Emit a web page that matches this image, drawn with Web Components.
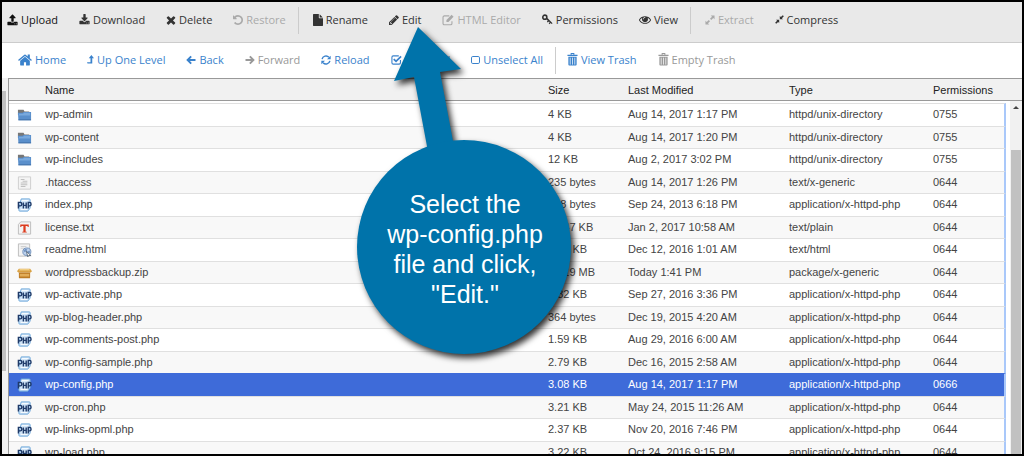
<!DOCTYPE html>
<html lang="en">
<head>
<meta charset="utf-8">
<title>File Manager</title>
<style>
body {
  margin: 0;
  font-family: "Liberation Sans", Arial, sans-serif;
}
</style>
</head>
<body>

<file-manager>
  <tool-bar slot="actions" class="actions">
    <tool-group>
      <tool-button icon="upload" strong>Upload</tool-button>
      <tool-button icon="download">Download</tool-button>
      <tool-button icon="times">Delete</tool-button>
      <tool-button icon="undo" disabled>Restore</tool-button>
    </tool-group>
    <tool-group>
      <tool-button icon="file">Rename</tool-button>
      <tool-button icon="pencil">Edit</tool-button>
      <tool-button icon="compose" disabled>HTML Editor</tool-button>
      <tool-button icon="key">Permissions</tool-button>
      <tool-button icon="eye">View</tool-button>
    </tool-group>
    <tool-group>
      <tool-button icon="expand" disabled>Extract</tool-button>
      <tool-button icon="compress">Compress</tool-button>
    </tool-group>
  </tool-bar>

  <tool-bar slot="navigation" class="navigation">
    <tool-group>
      <tool-button icon="home">Home</tool-button>
      <tool-button icon="levelup">Up One Level</tool-button>
      <tool-button icon="left">Back</tool-button>
      <tool-button icon="right" disabled>Forward</tool-button>
      <tool-button icon="refresh">Reload</tool-button>
      <tool-button icon="checked">Select All</tool-button>
      <tool-button icon="unchecked">Unselect All</tool-button>
    </tool-group>
    <tool-group>
      <tool-button icon="trash">View Trash</tool-button>
      <tool-button icon="trash" disabled>Empty Trash</tool-button>
    </tool-group>
  </tool-bar>

  <file-table slot="files"></file-table>

  <call-out slot="overlay">Select the<br>wp-config.php<br>file and click,<br>"Edit."</call-out>
</file-manager>

<script>
const tray = 'zm256 0q0-26-19-45t-45-19-45 19-19 45 19 45 45 19 45-19 19-45zm128-224v320q0 40-28 68t-68 28h-1472q-40 0-68-28t-28-68v-320q0-40 28-68t68-28';

// [width in px, height in px, viewBox, markup]
const toolIcons = {
  upload: [11, 12, '0 0 1792 1792', `<path d="M1344 1472q0-26-19-45t-45-19-45 19-19 45 19 45 45 19 45-19 19-45${tray}h427q21 56 70.5 92t110.5 36h256q61 0 110.5-36t70.5-92h427q40 0 68 28t28 68zm-325-648q-17 40-59 40h-256v448q0 26-19 45t-45 19h-256q-26 0-45-19t-19-45v-448h-256q-42 0-59-40-17-39 14-69l448-448q18-19 45-19t45 19l448 448q31 30 14 69z"/>`],
  download: [11, 12, '0 0 1792 1792', `<path d="M1344 1344q0-26-19-45t-45-19-45 19-19 45 19 45 45 19 45-19 19-45${tray}h465l135 136q58 56 136 56t136-56l136-136h464q40 0 68 28t28 68zm-325-569q17 41-14 70l-448 448q-18 19-45 19t-45-19l-448-448q-31-29-14-70 17-39 59-39h256v-448q0-26 19-45t45-19h256q26 0 45 19t19 45v448h256q42 0 59 39z"/>`],
  times: [10, 10, '200 200 1392 1392', '<path d="M1490 1322q0 40-28 68l-136 136q-28 28-68 28t-68-28l-294-294-294 294q-28 28-68 28t-68-28l-136-136q-28-28-28-68t28-68l294-294-294-294q-28-28-28-68t28-68l136-136q28-28 68-28t68 28l294 294 294-294q28-28 68-28t68 28l136 136q28 28 28 68t-28 68l-294 294 294 294q28 28 28 68z"/>'],
  undo: [10, 10, '128 128 1536 1536', '<path d="M1664 896q0 156-61 298t-164 245-245 164-298 61q-172 0-327-72.5t-264-204.5q-7-10-6.5-22.5t8.5-20.5l137-138q10-9 25-9 16 2 23 12 73 95 179 147t225 52q104 0 198.5-40.5t163.5-109.5 109.5-163.5 40.5-198.5-40.5-198.5-109.5-163.5-163.5-109.5-198.5-40.5q-98 0-188 35.5t-160 101.5l137 138q31 30 14 69-17 40-59 40h-448q-26 0-45-19t-19-45v-448q0-42 40-59 39-17 69 14l130 129q107-101 244.5-156.5t284.5-55.5q156 0 298 61t245 164 164 245 61 298z"/>'],
  file: [10, 12, '128 0 1536 1792', '<path d="M1152 512v-472q22 14 36 28l408 408q14 14 28 36h-472zm-128 32q0 40 28 68t68 28h544v1056q0 40-28 68t-68 28h-1344q-40 0-68-28t-28-68v-1600q0-40 28-68t68-28h800v544z"/>'],
  pencil: [10, 10, '128 128 1536 1536', '<path d="M491 1536l91-91-235-235-91 91v107h128v128h107zm523-928q0-22-22-22-10 0-17 7l-542 542q-7 7-7 17 0 22 22 22 10 0 17-7l542-542q7-7 7-17zm-54-192l416 416-832 832h-416v-416zm683 96q0 53-37 90l-166 166-416-416 166-165q36-38 90-38 53 0 91 38l235 234q37 39 37 91z"/>'],
  compose: [12, 12, '0 0 14 14', '<path d="M8.5 2.2H3A1.6 1.6 0 0 0 1.2 3.8V11A1.6 1.6 0 0 0 3 12.6h7A1.6 1.6 0 0 0 11.6 11V8.6" fill="none" stroke="currentColor" stroke-width="1.3"/><path d="M11.2 1l2.3 2.3-6 6H5.2V7z"/>'],
  key: [11, 11, '1 1 12.5 12.5', '<path d="M7.2 5.6l5.8 5.8-1 1-1.2-1.1-1.2 1.3-1-1 1.2-1.3-.9-.9-1.3 1.3-1-1L7.5 8.5 5.8 6.9z"/><circle cx="4.2" cy="4.6" r="2.3" fill="none" stroke="currentColor" stroke-width="1.8"/>'],
  eye: [12, 12, '0 64 1792 1792', '<path d="M1664 960q-152-236-381-353 61 104 61 225 0 185-131.5 316.5t-316.5 131.5-316.5-131.5-131.5-316.5q0-121 61-225-229 117-381 353 133 205 333.5 326.5t434.5 121.5 434.5-121.5 333.5-326.5zm-720-384q0-20-14-34t-34-14q-125 0-214.5 89.5t-89.5 214.5q0 20 14 34t34 14 34-14 14-34q0-86 61-147t147-61q20 0 34-14t14-34zm848 384q0 34-20 69-140 230-376.5 368.5t-499.5 138.5-499.5-139-376.5-368q-20-35-20-69t20-69q140-229 376.5-368t499.5-139 499.5 139 376.5 368q20 35 20 69z"/>'],
  expand: [10, 10, '.5 .5 11 11', '<path d="M6.8 1H11v4.2L9.6 3.8 7.4 6 6 4.6l2.2-2.2zM1 6.8l1.4 1.4L4.6 6 6 7.4 3.8 9.6 5.2 11H1z"/>'],
  compress: [9, 9, '0 0 12 12', '<path d="M6.4 5.6V1.4L7.8 2.8 10.4.2l1.4 1.4-2.6 2.6 1.4 1.4zM5.6 6.4v4.2L4.2 9.2l-2.6 2.6L.2 10.4l2.6-2.6-1.4-1.4z"/>'],
  home: [14, 12, '64 200 1664 1400', '<path d="M1472 992v480q0 26-19 45t-45 19h-384v-384h-256v384h-384q-26 0-45-19t-19-45v-480q0-1 .5-3t.5-3l575-474 575 474q1 2 1 6zm223-69l-62 74q-8 9-21 11h-3q-13 0-21-7l-692-577-692 577q-12 8-24 7-13-2-21-11l-62-74q-8-10-7-23.5t11-21.5l719-599q32-26 76-26t76 26l244 204v-195q0-14 9-23t23-9h192q14 0 23 9t9 23v408l219 182q10 8 11 21.5t-7 23.5z"/>'],
  levelup: [7, 9, '0 0 8 10', '<path d="M5 0l3 3.5H6V9.5H.6L0 8h4V3.5H2z"/>'],
  left: [10, 10, '0 0 12 12', '<path d="M6.2 1.6L1.9 6l4.3 4.4M2.4 6h9" fill="none" stroke="currentColor" stroke-width="2.3"/>'],
  right: [10, 10, '0 0 12 12', '<path d="M5.8 1.6L10.1 6l-4.3 4.4M9.6 6h-9" fill="none" stroke="currentColor" stroke-width="2.3"/>'],
  refresh: [10, 10, '0 0 12 12', '<path d="M1.3 5A4.8 4.8 0 0 1 9.5 2.8M10.7 7A4.8 4.8 0 0 1 2.5 9.2" fill="none" stroke="currentColor" stroke-width="1.7"/><path d="M11.6.8v4.4H7.2zM.4 11.2V6.8h4.4z"/>'],
  checked: [11, 11, '0 0 12 12', '<path d="M10.3 6.6V9.5A1.5 1.5 0 0 1 8.8 11H2.5A1.5 1.5 0 0 1 1 9.5v-6A1.5 1.5 0 0 1 2.5 2h6" fill="none" stroke="currentColor" stroke-width="1.2"/><path d="M3 5.5l2.5 2.5 5.5-5.5" fill="none" stroke="currentColor" stroke-width="1.9"/>'],
  unchecked: [9, 10, '0 0 9 10', '<rect x=".5" y="1.5" width="8" height="7" rx="1.3" fill="none" stroke="currentColor"/>'],
  trash: [11, 13, '0 0 12 14', '<path d="M1.5 4h9v8.5q0 1-1 1h-7q-1 0-1-1zM.5 2h11v1.2H.5zM4 0h4v2H7V1H5v1H4z"/><path d="M3.5 5v7.5M6 5v7.5M8.5 5v7.5" stroke="#fff" stroke-width=".8"/>']
};

const fileIcons = {
  folder: '<path d="M1 2h6l1 2h5v4H1z" fill="#777"/><path d="M1 5.5h5l1-1h8V14H1.5z" fill="#5a8fcb"/><path d="M2 6.5h4.5l1-1h6.5v3H2z" fill="#79a9dd"/><path d="M1.5 13.5H15" stroke="#3f6ea5"/>',
  generic: '<path d="M1.5 1h13v14h-13z" fill="#f4f4f4" stroke="#ccc"/><path d="M4 4h4M6 6h5M4 8h7M4 10h7M4 12h5" stroke="#bbb"/>',
  text: '<path d="M4 1h10.5v14h-13V4z" fill="#f3f3f3" stroke="#bbb"/><path d="M3.5 4h9v2.800h-.9L11 5.600H9.200v6.600h1.200v1H5.600v-1h1.200V5.600H5l-.6 1.200h-.9z" fill="#dc3a1c"/>',
  html: '<path d="M1.5 1h12v14h-12z" fill="#f3f3f3" stroke="#bbb"/><path d="M4 4h6M4 6h4" stroke="#ccc"/><circle cx="10.5" cy="10" r="4.3" fill="#bdd2ee" stroke="#6c8db8"/><path d="M7 8.5l2-2 2 1-1 2-2 1zM10.5 10l3-1.5.5 2-2 2.5z" fill="#7596c4"/><path d="M10 9.5l5 5-2.5-.3-1 1.6z" fill="#fff" stroke="#567"/>',
  zip: '<path d="M2 3h12l2 3-1.5 1.5h-13L0 6z" fill="#d9a143"/><path d="M3 3.5h10L14 5H2z" fill="#f0cd82"/><path d="M2 7.5h12V13q0 1-1 1H3q-1 0-1-1z" fill="#bd7c25"/><path d="M3 9h10v3H3z" fill="#e2ad58"/>',
  php: '<path d="M4.5 1H13q1 0 1 1v9.5L11.500 15H3q-1 0-1-1v-3z" fill="#cfe4f8" stroke="#68a4d8"/><path d="M5 3h7M4 13h7" stroke="#fff"/><path d="M1.5 12V5h2q1.600 0 1.600 2T3.500 9h-2M6.800 5v7M9.800 5v7M6.800 8.500h3M12 12V5h1.500Q15 5 15 7t-1.500 2H12" fill="none" stroke="#1f3a68" stroke-width="1.500"/>'
};

class ToolButton extends HTMLElement {
  connectedCallback() {
    const [width, height, box, markup] = toolIcons[this.getAttribute('icon')];
    const root = this.attachShadow({ mode: 'open' });
    root.innerHTML = `
      <style>
      :host {
        display: block;
        flex: none;
      }
      button {
        display: flex;
        align-items: center;
        gap: 3px;
        padding: 0 0 2px;
        border: 0;
        background: none;
        color: var(--tool-color);
        font: 11px/18px "Open Sans", "Noto Sans", sans-serif;
        white-space: nowrap;
      }
      :host([strong]) button { color: #111; }
      button:disabled { color: var(--tool-disabled); }
      svg {
        flex: none;
        fill: currentColor;
      }
      </style>
      <button type="button"${this.hasAttribute('disabled') ? ' disabled' : ''}>
        <svg width="${width}" height="${height}" viewBox="${box}" preserveAspectRatio="none" aria-hidden="true">${markup}</svg>
        <span><slot></slot></span>
      </button>
    `;
  }
}

class ToolGroup extends HTMLElement {
  constructor() {
    super();
    this.attachShadow({ mode: 'open' }).innerHTML = `
      <style>
      :host {
        display: flex;
        align-items: center;
        gap: 21px;
        height: 27px;
      }
      :host(:not(:first-of-type)) {
        margin-left: 12px;
        padding-left: var(--group-indent);
        border-left: 1px solid #ccc;
      }
      </style>
      <slot></slot>
    `;
  }
}

class ToolBar extends HTMLElement {
  constructor() {
    super();
    this.attachShadow({ mode: 'open' }).innerHTML = `
      <style>
      :host {
        display: flex;
        align-items: center;
        overflow: hidden;
      }
      </style>
      <slot></slot>
    `;
  }
}

class FileTable extends HTMLElement {
  constructor() {
    super();

    this.files = [
      ['folder', 'wp-admin', '4 KB', 'Aug 14, 2017 1:17 PM', 'httpd/unix-directory', '0755'],
      ['folder', 'wp-content', '4 KB', 'Aug 14, 2017 1:20 PM', 'httpd/unix-directory', '0755'],
      ['folder', 'wp-includes', '12 KB', 'Aug 2, 2017 3:02 PM', 'httpd/unix-directory', '0755'],
      ['generic', '.htaccess', '235 bytes', 'Aug 14, 2017 1:26 PM', 'text/x-generic', '0644'],
      ['php', 'index.php', '418 bytes', 'Sep 24, 2013 6:18 PM', 'application/x-httpd-php', '0644'],
      ['text', 'license.txt', '19.47 KB', 'Jan 2, 2017 10:58 AM', 'text/plain', '0644'],
      ['html', 'readme.html', '7.24 KB', 'Dec 12, 2016 1:01 AM', 'text/html', '0644'],
      ['zip', 'wordpressbackup.zip', '15.19 MB', 'Today 1:41 PM', 'package/x-generic', '0644'],
      ['php', 'wp-activate.php', '5.32 KB', 'Sep 27, 2016 3:36 PM', 'application/x-httpd-php', '0644'],
      ['php', 'wp-blog-header.php', '364 bytes', 'Dec 19, 2015 4:20 AM', 'application/x-httpd-php', '0644'],
      ['php', 'wp-comments-post.php', '1.59 KB', 'Aug 29, 2016 6:00 AM', 'application/x-httpd-php', '0644'],
      ['php', 'wp-config-sample.php', '2.79 KB', 'Dec 16, 2015 2:58 AM', 'application/x-httpd-php', '0644'],
      ['php', 'wp-config.php', '3.08 KB', 'Aug 14, 2017 1:17 PM', 'application/x-httpd-php', '0666'],
      ['php', 'wp-cron.php', '3.21 KB', 'May 24, 2015 11:26 AM', 'application/x-httpd-php', '0644'],
      ['php', 'wp-links-opml.php', '2.37 KB', 'Nov 20, 2016 7:46 PM', 'application/x-httpd-php', '0644'],
      ['php', 'wp-load.php', '3.22 KB', 'Oct 24, 2016 9:15 PM', 'application/x-httpd-php', '0644']
    ];
    this.selected = 'wp-config.php';

    const rows = this.files.map(([icon, name, ...rest]) => `
      <tr${name === this.selected ? ' class="selected"' : ''}>
        <td><svg width="15" height="14" viewBox="0 0 16 16" preserveAspectRatio="none" aria-hidden="true">${fileIcons[icon]}</svg></td>
        <td>${name}</td>
        ${rest.map(cell => `<td>${cell}</td>`).join('')}
      </tr>`).join('');

    this.attachShadow({ mode: 'open' }).innerHTML = `
      <style>
      :host {
        display: flex;
        align-items: stretch;
        border-top: 1px solid #999;
        border-left: 1px solid #999;
      }
      table {
        flex: 1;
        min-width: 0;
        table-layout: fixed;
        border-spacing: 0;
        font-size: 11px;
        line-height: 16px;
        color: #444;
      }
      .icon { width: 36px; }
      .size { width: 80px; }
      .modified { width: 161px; }
      .type { width: 144px; }
      .permissions { width: 73px; }
      th, td {
        box-sizing: border-box;
        padding: 0;
        text-align: left;
        white-space: nowrap;
      }
      th {
        height: 22px;
        background: #f1f1f1;
        border-bottom: 1px solid #999;
        color: #222;
        font-weight: normal;
      }
      /* strip of the scrolled-off row that shows under the header */
      .peek td {
        height: 2px;
        line-height: 0;
      }
      tbody td {
        border-top: 1px solid #e0e0e0;
        height: 22px;
        padding-bottom: 2px;
      }
      tbody tr:nth-child(odd) td { height: 23px; }
      tbody tr:nth-child(even) { background: #f8f8f8; }
      tbody td:first-child { padding: 0 0 0 8px; }
      tbody td:last-child { border-right: 2px solid #a9c8fa; }
      tbody tr.selected { background: #3e6bd9; color: #fff; }
      tbody tr.selected td { border-top-color: #3e6bd9; }
      svg { display: block; }
      .rail {
        flex: 0 0 16px;
        display: flex;
        flex-direction: column;
      }
      .cap {
        height: 21px;
        background: #f1f1f1;
        border-bottom: 1px solid #999;
      }
      .track {
        flex: 1;
        display: flex;
        flex-direction: column;
        align-items: center;
        margin-left: 4px;
        background: #f1f1f1;
      }
      .arrow {
        margin: 5px 0 0;
        border: 3px solid transparent;
        border-top-width: 0;
        border-bottom-color: #444;
      }
      .thumb {
        flex: 1;
        align-self: stretch;
        margin: 41px 1px 0;
        background: #c1c1c1;
      }
      </style>
      <table>
        <colgroup>
          <col class="icon"><col><col class="size"><col class="modified"><col class="type"><col class="permissions">
        </colgroup>
        <thead>
          <tr><th></th><th>Name</th><th>Size</th><th>Last Modified</th><th>Type</th><th>Permissions</th></tr>
          <tr class="peek"><td colspan="6"></td></tr>
        </thead>
        <tbody>${rows}</tbody>
      </table>
      <div class="rail">
        <div class="cap"></div>
        <div class="track"><div class="arrow"></div><div class="thumb"></div></div>
      </div>
    `;
  }
}

class CallOut extends HTMLElement {
  constructor() {
    super();
    this.attachShadow({ mode: 'open' }).innerHTML = `
      <style>
      :host {
        position: absolute;
        left: 355px;
        top: 25px;
        width: 214px;
        height: 327px;
        pointer-events: none;
      }
      svg {
        display: block;
        overflow: visible;
        fill: #0073aa;
        filter: drop-shadow(3px 4px 3px rgba(0, 0, 0, .8));
      }
      div {
        position: absolute;
        inset: 117px 0 0 2px;
        display: grid;
        place-content: center;
        color: #fff;
        font-size: 25px;
        line-height: 30px;
        text-align: center;
        white-space: nowrap;
      }
      </style>
      <svg width="214" height="327" viewBox="0 0 214 327" aria-hidden="true">
        <path d="M61 0L104 42 83 45 99 130 72 130 57 50 37 54z"/>
        <circle cx="107" cy="220" r="107"/>
      </svg>
      <div><span><slot></slot></span></div>
    `;
  }
}

class FileManager extends HTMLElement {
  constructor() {
    super();
    this.attachShadow({ mode: 'open' }).innerHTML = `
      <style>
      :host {
        position: relative;
        box-sizing: border-box;
        display: flex;
        flex-direction: column;
        height: 100vh;
        border: 2px solid #000;
        background: #fff;
        overflow: hidden;
      }
      ::slotted(.actions) {
        flex: none;
        height: 37px;
        padding: 0 5px 3px;
        background: #e9e9e9;
        border-bottom: 1px solid #ccc;
        --tool-color: #333;
        --tool-disabled: #aaa;
        --group-indent: 14px;
      }
      ::slotted(.navigation) {
        flex: none;
        height: 35px;
        padding-left: 16px;
        --tool-color: #3a82cc;
        --tool-disabled: #999;
        --group-indent: 11px;
      }
      main {
        flex: 1;
        min-height: 0;
        display: flex;
      }
      .tree {
        flex: 0 0 6px;
        background: #f1f1f1;
      }
      .tree div {
        width: 4px;
        height: 280px;
        margin-top: 13px;
        background: #c1c1c1;
      }
      ::slotted(file-table) {
        flex: 1;
        min-width: 0;
        align-self: flex-start;
      }
      </style>
      <slot name="actions"></slot>
      <slot name="navigation"></slot>
      <main>
        <div class="tree"><div></div></div>
        <slot name="files"></slot>
      </main>
      <slot name="overlay"></slot>
    `;
  }
}

customElements.define('tool-button', ToolButton);
customElements.define('tool-group', ToolGroup);
customElements.define('tool-bar', ToolBar);
customElements.define('file-table', FileTable);
customElements.define('call-out', CallOut);
customElements.define('file-manager', FileManager);
</script>
</body>
</html>
